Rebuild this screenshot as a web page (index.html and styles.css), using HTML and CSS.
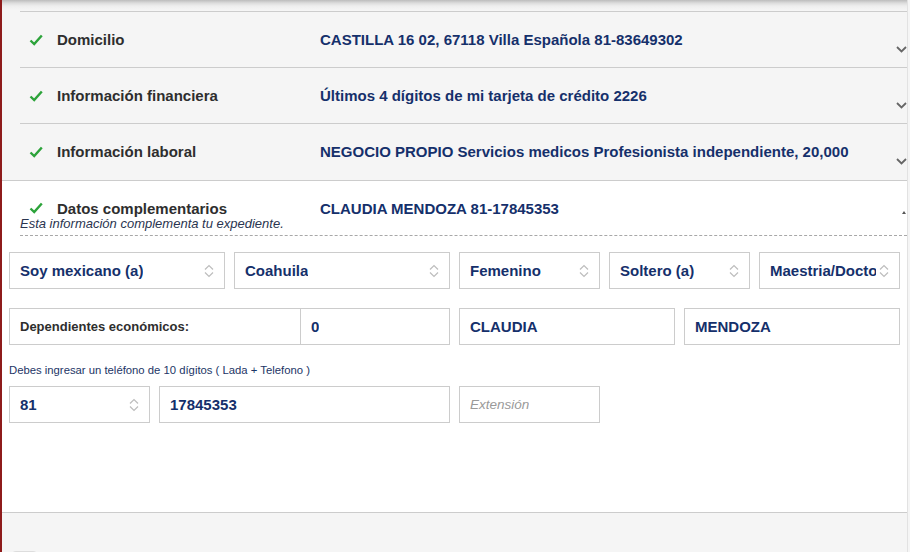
FILE: index.html
```html
<!DOCTYPE html>
<html lang="es">
<head>
<meta charset="utf-8">
<title>Datos</title>
<link rel="stylesheet" href="styles.css">
</head>
<body>
<div class="page">
  <div class="top-shadow"></div>
  <div class="acc">
    <div class="acc-row">
      <svg class="check" viewBox="0 0 14 12" width="14" height="12"><path d="M1.5 6.5 L5.2 10 L12.8 1.5" fill="none" stroke="#2ca33a" stroke-width="2.4"/></svg>
      <span class="acc-label">Domicilio</span>
      <span class="acc-value">CASTILLA 16 02, 67118 Villa Española 81-83649302</span>
      <svg class="chev" viewBox="0 0 11 7" width="11" height="7"><path d="M1 1 L5.5 5.5 L10 1" fill="none" stroke="#666" stroke-width="1.8"/></svg>
    </div>
    <div class="acc-row">
      <svg class="check" viewBox="0 0 14 12" width="14" height="12"><path d="M1.5 6.5 L5.2 10 L12.8 1.5" fill="none" stroke="#2ca33a" stroke-width="2.4"/></svg>
      <span class="acc-label">Información financiera</span>
      <span class="acc-value">Últimos 4 dígitos de mi tarjeta de crédito 2226</span>
      <svg class="chev" viewBox="0 0 11 7" width="11" height="7"><path d="M1 1 L5.5 5.5 L10 1" fill="none" stroke="#666" stroke-width="1.8"/></svg>
    </div>
    <div class="acc-row">
      <svg class="check" viewBox="0 0 14 12" width="14" height="12"><path d="M1.5 6.5 L5.2 10 L12.8 1.5" fill="none" stroke="#2ca33a" stroke-width="2.4"/></svg>
      <span class="acc-label">Información laboral</span>
      <span class="acc-value">NEGOCIO PROPIO Servicios medicos Profesionista independiente, 20,000</span>
      <svg class="chev" viewBox="0 0 11 7" width="11" height="7"><path d="M1 1 L5.5 5.5 L10 1" fill="none" stroke="#666" stroke-width="1.8"/></svg>
    </div>
  </div>

  <section class="open">
    <div class="open-head">
      <svg class="check" viewBox="0 0 14 12" width="14" height="12"><path d="M1.5 6.5 L5.2 10 L12.8 1.5" fill="none" stroke="#2ca33a" stroke-width="2.4"/></svg>
      <span class="acc-label">Datos complementarios</span>
      <span class="acc-value">CLAUDIA MENDOZA 81-17845353</span>
      <span class="caret"></span>
    </div>
    <div class="open-sub">Esta información complementa tu expediente.</div>
    <div class="dash"></div>

    <div class="form">
      <div class="frow">
        <div class="field sel w216"><span class="ftext">Soy mexicano (a)</span><svg class="updown" viewBox="0 0 10 14" width="10" height="14"><path d="M1 5.5 L5 1.5 L9 5.5 M1 8.5 L5 12.5 L9 8.5" fill="none" stroke="#bdbdbd" stroke-width="1.2"/></svg></div>
        <div class="field sel w216"><span class="ftext">Coahuila</span><svg class="updown" viewBox="0 0 10 14" width="10" height="14"><path d="M1 5.5 L5 1.5 L9 5.5 M1 8.5 L5 12.5 L9 8.5" fill="none" stroke="#bdbdbd" stroke-width="1.2"/></svg></div>
        <div class="field sel w141"><span class="ftext">Femenino</span><svg class="updown" viewBox="0 0 10 14" width="10" height="14"><path d="M1 5.5 L5 1.5 L9 5.5 M1 8.5 L5 12.5 L9 8.5" fill="none" stroke="#bdbdbd" stroke-width="1.2"/></svg></div>
        <div class="field sel w141"><span class="ftext">Soltero (a)</span><svg class="updown" viewBox="0 0 10 14" width="10" height="14"><path d="M1 5.5 L5 1.5 L9 5.5 M1 8.5 L5 12.5 L9 8.5" fill="none" stroke="#bdbdbd" stroke-width="1.2"/></svg></div>
        <div class="field sel w141 tight"><span class="ftext">Maestria/Doctorado</span><svg class="updown" viewBox="0 0 10 14" width="10" height="14"><path d="M1 5.5 L5 1.5 L9 5.5 M1 8.5 L5 12.5 L9 8.5" fill="none" stroke="#bdbdbd" stroke-width="1.2"/></svg></div>
      </div>

      <div class="frow row2">
        <div class="group">
          <div class="field w292 lbl"><span class="ftext">Dependientes económicos:</span></div>
          <div class="field w150 joined"><span class="ftext">0</span></div>
        </div>
        <div class="field w216"><span class="ftext">CLAUDIA</span></div>
        <div class="field w216"><span class="ftext">MENDOZA</span></div>
      </div>

      <div class="note">Debes ingresar un teléfono de 10 dígitos ( Lada + Telefono )</div>

      <div class="frow">
        <div class="field sel w141"><span class="ftext">81</span><svg class="updown" viewBox="0 0 10 14" width="10" height="14"><path d="M1 5.5 L5 1.5 L9 5.5 M1 8.5 L5 12.5 L9 8.5" fill="none" stroke="#bdbdbd" stroke-width="1.2"/></svg></div>
        <div class="field w291"><span class="ftext">17845353</span></div>
        <div class="field w141"><span class="ftext ph">Extensión</span></div>
      </div>
    </div>
  </section>

  <div class="foot">
    <div class="foot-btn"></div>
  </div>
</div>
</body>
</html>
```

FILE: styles.css
```css
* { box-sizing: border-box; }
html, body { margin: 0; padding: 0; }
body {
  background: #f5f5f5;
  font-family: "Liberation Sans", Arial, sans-serif;
  width: 910px;
  height: 552px;
  overflow: hidden;
}
.page {
  border-left: 2px solid #8e1b1b;
  min-height: 552px;
  width: 908px;
  border-right: 1px solid #e2e2e2;
  background: #f5f5f5;
}
.top-shadow {
  height: 11px;
  background: linear-gradient(#bcbcbc 0px, #dcdcdc 3px, #eeeeee 6px, #f5f5f5 10px);
}
.acc { margin-left: 18px; padding-bottom: 1px; }
.acc-row {
  display: flex;
  align-items: center;
  height: 56px;
  border-top: 1px solid #cccccc;
  position: relative;
}
.check { flex: none; margin-left: 9px; margin-right: 14px; }
.acc-label {
  width: 263px;
  flex: none;
  font-size: 15px;
  font-weight: bold;
  color: #2e2e2e;
}
.acc-value {
  font-size: 15px;
  font-weight: bold;
  color: #15306b;
  white-space: nowrap;
}
.chev {
  position: absolute;
  right: 0px;
  top: 34px;
}
.open {
  border-top: 1px solid #cccccc;
  border-bottom: 1px solid #cccccc;
  background: #ffffff;
  height: 333px;
  position: relative;
}
.open-head {
  display: flex;
  align-items: center;
  margin-left: 18px;
  padding-top: 18px;
  height: 36px;
}
.caret {
  position: absolute;
  right: 1px;
  top: 30px;
  width: 0; height: 0;
  border-left: 2px solid transparent;
  border-right: 2px solid transparent;
  border-bottom: 3px solid #555;
}
.open-sub {
  margin-left: 18px;
  font-size: 13px;
  line-height: 14px;
  font-style: italic;
  color: #2a3550;
}
.dash {
  margin-left: 18px;
  margin-top: 4px;
  border-top: 1px dashed #a8a8a8;
}
.form { padding-left: 7px; padding-top: 16px; }
.frow { display: flex; gap: 9px; }
.row2 { margin-top: 19px; }
.group { display: flex; }
.field {
  height: 37px;
  border: 1px solid #cccccc;
  display: flex;
  align-items: center;
  padding-left: 10px;
  background: #fff;
  flex: none;
  position: relative;
}
.sel { padding-right: 30px; }
.tight { padding-right: 23px; }
.ftext {
  font-size: 15px;
  font-weight: bold;
  color: #15306b;
  white-space: nowrap;
  overflow: hidden;
}
.lbl .ftext { color: #2e2e2e; font-size: 13px; }
.ph { font-weight: normal; font-style: italic; color: #9a9a9a; font-size: 13.5px; }
.updown { position: absolute; right: 10px; top: 11px; }
.joined { margin-left: -1px; }
.w216 { width: 216px; }
.w141 { width: 141px; }
.w292 { width: 292px; }
.w150 { width: 150px; }
.w291 { width: 291px; }
.note {
  margin-top: 19px;
  margin-bottom: 9px;
  font-size: 11.3px;
  line-height: 13px;
  color: #1c3566;
}
.foot { padding-top: 38px; padding-left: 9px; }
.foot-btn {
  width: 27px;
  height: 10px;
  border-radius: 5px 5px 0 0;
  background: #dddddd;
}
```
